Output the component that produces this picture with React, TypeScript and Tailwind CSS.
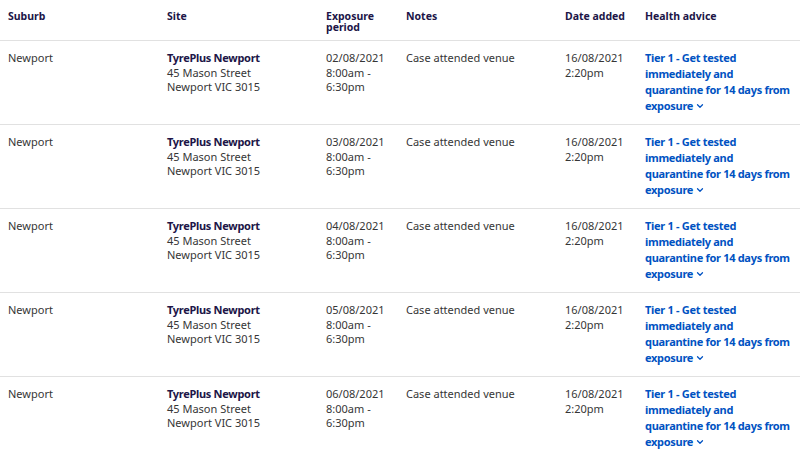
import { ChevronDown } from "lucide-react";

interface Exposure {
  suburb: string;
  siteName: string;
  street: string;
  locality: string;
  date: string;
  time: string;
  notes: string;
  added: string;
  addedTime: string;
}

const rows: Exposure[] = ["02/08/2021", "03/08/2021", "04/08/2021", "05/08/2021", "06/08/2021"].map((date) => ({
  suburb: "Newport",
  siteName: "TyrePlus Newport",
  street: "45 Mason Street",
  locality: "Newport VIC 3015",
  date,
  time: "8:00am - 6:30pm",
  notes: "Case attended venue",
  added: "16/08/2021",
  addedTime: "2:20pm",
}));

const cols = "grid grid-cols-[159px_159px_80px_159px_80px_1fr]";

export default function App() {
  return (
    <div className="w-[800px] h-[460px] overflow-hidden bg-white font-['Noto_Sans',sans-serif]">
      <div className={`${cols} h-[41px] border-b border-[#e1e1e1] text-[10.5px] leading-[10.5px] font-bold text-[#201547]`}>
        <div className="pl-2 pr-2 pt-[11px]">Suburb</div>
        <div className="pl-2 pr-2 pt-[11px]">Site</div>
        <div className="pl-2 pr-2 pt-[11px]">Exposure period</div>
        <div className="pl-2 pr-2 pt-[11px]">Notes</div>
        <div className="pl-2 pr-2 pt-[11px]">Date added</div>
        <div className="pl-2 pr-2 pt-[11px]">Health advice</div>
      </div>

      {rows.map((row) => (
        <div key={row.date} className={`${cols} h-[84px] border-b border-[#e1e1e1] text-[11px] leading-[14.5px] text-[#363636]`}>
          <div className="pl-2 pr-2 pt-[10px]">{row.suburb}</div>
          <div className="pl-2 pr-2 pt-[10px]">
            <div className="font-bold tracking-[-0.3px] text-[#201547]">{row.siteName}</div>
            <div>{row.street}</div>
            <div>{row.locality}</div>
          </div>
          <div className="pl-2 pr-2 pt-[10px]">
            {row.date}
            <br />
            {row.time}
          </div>
          <div className="pl-2 pr-2 pt-[10px]">{row.notes}</div>
          <div className="pl-2 pr-2 pt-[10px]">
            {row.added}
            <br />
            {row.addedTime}
          </div>
          <div className="pl-2 pr-2 pt-[9px] font-bold tracking-[-0.3px] leading-[16px] text-[#0052c2]">
            Tier 1 - Get tested immediately and quarantine for 14 days from exposure
            <ChevronDown className="inline-block ml-[2px] h-[10px] w-[10px] align-[-1px]" strokeWidth={3} />
          </div>
        </div>
      ))}
    </div>
  );
}
